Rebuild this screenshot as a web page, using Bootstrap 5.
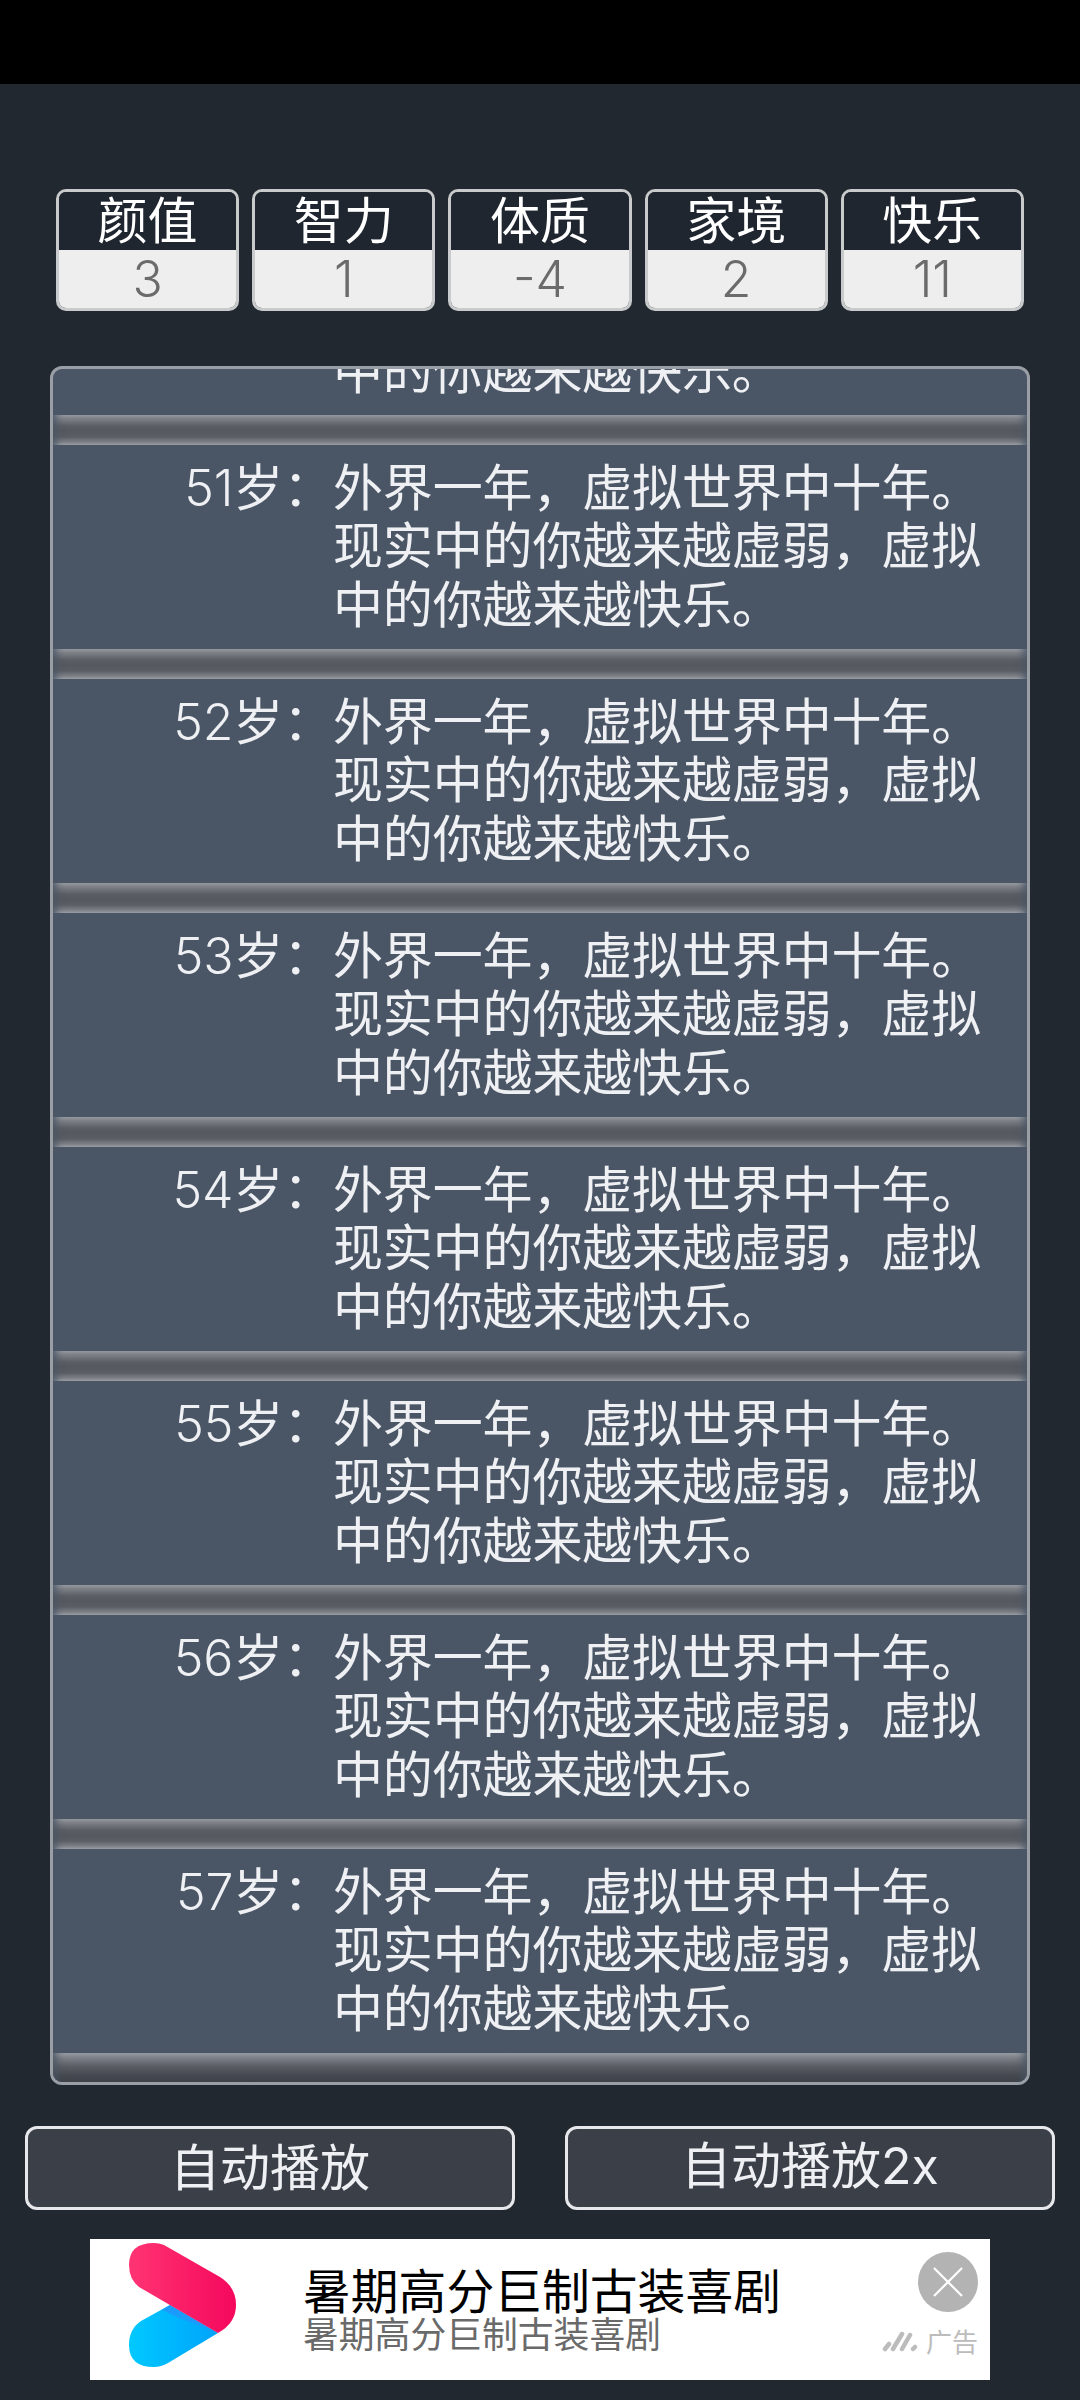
<!DOCTYPE html>
<html lang="zh-CN">
<head>
    <meta charset="UTF-8">
    <meta name="viewport" content="width=device-width, initial-scale=1.0">
    <title>人生重开</title>
    <link href="https://cdn.jsdelivr.net/npm/bootstrap@5.3.2/dist/css/bootstrap.min.css" rel="stylesheet">
    <style>
        html, body { height: 2400px; overflow: hidden; }
        body { background: #212830; font-family: "Noto Sans CJK SC", "Roboto", sans-serif; color: #eef0f3; }
        .status-bar { height: 84px; background: #000; }

        .stat-row { padding: 105px 56px 0; gap: 13px; }
        .stat-box { width: 183.2px; height: 122px; border: 3px solid #c9cacc; border-radius: 10px; }
        .stat-name { height: 58px; background: #1f2630; border-radius: 7px 7px 0 0; color: #fff; font-size: 50px; line-height: 50px; text-align: center; }
        .stat-num { height: 58px; background: #eee; border-radius: 0 0 7px 7px; color: #6b6b6b; font-family: "Inter", sans-serif; font-weight: 300; font-size: 50px; line-height: 58px; text-align: center; }

        .log-panel { height: 1719px; margin: 55px 50px 0; border: 3px solid #9a9ea5; border-radius: 12px; overflow: hidden; background: #4a5565; }
        .log-list { margin-top: -158px; }
        .log-item { height: 204px; padding-top: 10px; font-size: 50px; line-height: 58.4px; letter-spacing: -0.15px; }
        .log-age { width: 280px; flex: none; text-align: right; }
        .log-age span { font-family: "Inter", sans-serif; font-weight: 300; font-size: 50px; }
        .log-text { width: 655px; flex: none; }
        .log-sep { height: 30px; background: linear-gradient(#a0a3a9 0, #7c7f85 4px, #5b5e64 11px, #55585e 16px, #5b5e64 22px, #7e8187 27px, #a6a9ae 30px); box-shadow: inset 9px 0 8px -6px #4a5565, inset -9px 0 8px -6px #4a5565; }
        .log-sep-end { background: linear-gradient(#a0a3a9 0, #7c7f85 5px, #5b5e64 13px, #464a50 22px, #3d4147 30px); }

        .play-row { padding: 41px 25px 0; gap: 50px; }
        .play-btn { width: 490px; height: 84px; padding: 0 0 8px; border: 3px solid #e6e8eb; border-radius: 12px; background: #3a3f48; color: #eef0f3; font-size: 50px; line-height: 64px; }
        .play-btn span { font-family: "Inter", sans-serif; }

        .ad-box { width: 900px; height: 141px; margin: 29px 0 0 90px; background: #fff; }
        .ad-logo { flex: none; width: 107px; height: 124px; margin: 4px 67px 0 39px; }
        .ad-title { color: #000; font-size: 47.8px; line-height: 56px; margin-top: 22px; }
        .ad-sub { color: #6a6a6a; font-size: 35.8px; line-height: 36px; margin-top: -3px; }
        .ad-side { width: 106px; padding-right: 12px; }
        .ad-close { width: 60px; height: 60px; margin-top: 13px; }
        .ad-mark { color: #bcbcbc; font-size: 26px; line-height: 30px; margin-top: 14px; white-space: nowrap; }
    </style>
</head>
<body>
    <div class="status-bar"></div>

    <!-- Stats -->
    <div class="stat-row d-flex">
        <div class="stat-box"><div class="stat-name">颜值</div><div class="stat-num">3</div></div>
        <div class="stat-box"><div class="stat-name">智力</div><div class="stat-num">1</div></div>
        <div class="stat-box"><div class="stat-name">体质</div><div class="stat-num">-4</div></div>
        <div class="stat-box"><div class="stat-name">家境</div><div class="stat-num">2</div></div>
        <div class="stat-box"><div class="stat-name">快乐</div><div class="stat-num">11</div></div>
    </div>

    <!-- Life log -->
    <div class="log-panel">
        <div class="log-list" id="logList"></div>
    </div>

    <!-- Buttons -->
    <div class="play-row d-flex">
        <button type="button" class="btn play-btn">自动播放</button>
        <button type="button" class="btn play-btn">自动播放<span>2x</span></button>
    </div>

    <!-- Ad -->
    <div class="ad-box d-flex">
        <svg class="ad-logo" viewBox="0 0 107 124">
            <defs>
                <linearGradient id="pinkFill" x1="0" y1="0" x2="1" y2="0">
                    <stop offset="0" stop-color="#ff3473"/>
                    <stop offset="1" stop-color="#f5085c"/>
                </linearGradient>
                <linearGradient id="blueFill" x1="0" y1="0" x2="1" y2="0">
                    <stop offset="0" stop-color="#00c9ff"/>
                    <stop offset="1" stop-color="#00a3fb"/>
                </linearGradient>
            </defs>
            <path fill="url(#blueFill)" d="M41 62 L89 90 L39 120 Q32 124 25 124 Q0 124 0 102 Q0 86 12 78Z"/>
            <path fill="#1a9bfd" d="M41 62 L89 90 L48 74 L33 67Z"/>
            <path fill="url(#pinkFill)" d="M35 2 L91 34 Q107 44 107 62 Q107 80 89 90 L10 44 Q0 36 0 22 Q0 0 25 0 Q30 0 35 2Z"/>
        </svg>
        <div class="flex-grow-1">
            <div class="ad-title">暑期高分巨制古装喜剧</div>
            <div class="ad-sub">暑期高分巨制古装喜剧</div>
        </div>
        <div class="ad-side d-flex flex-column align-items-end">
            <svg class="ad-close" viewBox="0 0 60 60">
                <circle cx="30" cy="30" r="30" fill="#b3b3b3"/>
                <path d="M16 16 L44 44 M44 16 L16 44" stroke="#fff" stroke-width="2.2" fill="none"/>
            </svg>
            <div class="ad-mark d-flex align-items-center gap-2">
                <svg width="36" height="22" viewBox="0 0 36 22">
                    <path d="M3 19 L7 14 M11 19 L20 4 M20 19 L28 5 M31 19 L33 17" stroke="#bcbcbc" stroke-width="4.5" stroke-linecap="round" fill="none"/>
                </svg>
                <span>广告</span>
            </div>
        </div>
    </div>

    <script src="https://cdn.jsdelivr.net/npm/bootstrap@5.3.2/dist/js/bootstrap.bundle.min.js"></script>
    <script>
        // Log rows all carry the same line, only the age changes
        const logList = document.getElementById('logList');
        const logLine = '外界一年，虚拟世界中十年。现实中的你越来越虚弱，虚拟中的你越来越快乐。';
        let html = '';
        for (let age = 50; age <= 57; age++) {
            html += `<div class="log-item d-flex"><div class="log-age"><span>${age}</span>岁：</div><div class="log-text">${logLine}</div></div>`;
            html += `<div class="log-sep${age === 57 ? ' log-sep-end' : ''}"></div>`;
        }
        logList.innerHTML = html;
    </script>
</body>
</html>
